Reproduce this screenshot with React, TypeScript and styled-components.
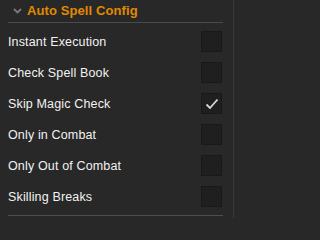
import React from "react";
import styled, { createGlobalStyle } from "styled-components";

const Global = createGlobalStyle`
  html, body { margin: 0; padding: 0; background: #282828; }
  * { box-sizing: border-box; }
`;

const Panel = styled.div`
  width: 234px;
  height: 218px;
  background: #282828;
  border-right: 1px solid #3a3a3a;
  padding: 0 10px 0 8px;
  display: flex;
  flex-direction: column;
  font-family: "Liberation Sans", "DejaVu Sans", sans-serif;
`;

const Header = styled.div`
  height: 23px;
  display: flex;
  align-items: center;
  gap: 5px;
  padding-left: 5px;
  border-bottom: 1px solid #4a4a4a;
  padding-bottom: 1px;
`;

const Title = styled.span`
  color: #e08a00;
  font-family: "Liberation Sans", sans-serif;
  font-weight: bold;
  font-size: 13px;
  letter-spacing: 0.1px;
`;

const List = styled.div`
  display: flex;
  flex-direction: column;
  padding: 3px 0 3px;
  border-bottom: 1px solid #4e4e4e;
`;

const Row = styled.div`
  height: 31px;
  display: flex;
  align-items: center;
  justify-content: space-between;
  padding-right: 1px;
`;

const Label = styled.span`
  color: #f2f2f2;
  font-size: 12.5px;
  letter-spacing: 0.15px;
`;

const Box = styled.div<{ $checked?: boolean }>`
  width: 21px;
  height: 21px;
  background: #1f1f1f;
  border: 1px solid #191919;
  display: flex;
  align-items: center;
  justify-content: center;
`;

const Chevron = () => (
  <svg width="9" height="6" viewBox="0 0 9 6">
    <polyline points="1,1 4.5,4.5 8,1" fill="none" stroke="#7a7a7a" strokeWidth="1.8" />
  </svg>
);

const Check = () => (
  <svg width="14" height="12" viewBox="0 0 14 12">
    <polyline points="1.5,6.5 5,10 12.5,1.5" fill="none" stroke="#d8d8d8" strokeWidth="1.8" />
  </svg>
);

const items: { label: string; checked: boolean }[] = [
  { label: "Instant Execution", checked: false },
  { label: "Check Spell Book", checked: false },
  { label: "Skip Magic Check", checked: true },
  { label: "Only in Combat", checked: false },
  { label: "Only Out of Combat", checked: false },
  { label: "Skilling Breaks", checked: false },
];

export default function App() {
  return (
    <>
      <Global />
      <Panel>
        <Header>
          <Chevron />
          <Title>Auto Spell Config</Title>
        </Header>
        <List>
          {items.map((it) => (
            <Row key={it.label}>
              <Label>{it.label}</Label>
              <Box $checked={it.checked}>{it.checked && <Check />}</Box>
            </Row>
          ))}
        </List>
      </Panel>
    </>
  );
}
